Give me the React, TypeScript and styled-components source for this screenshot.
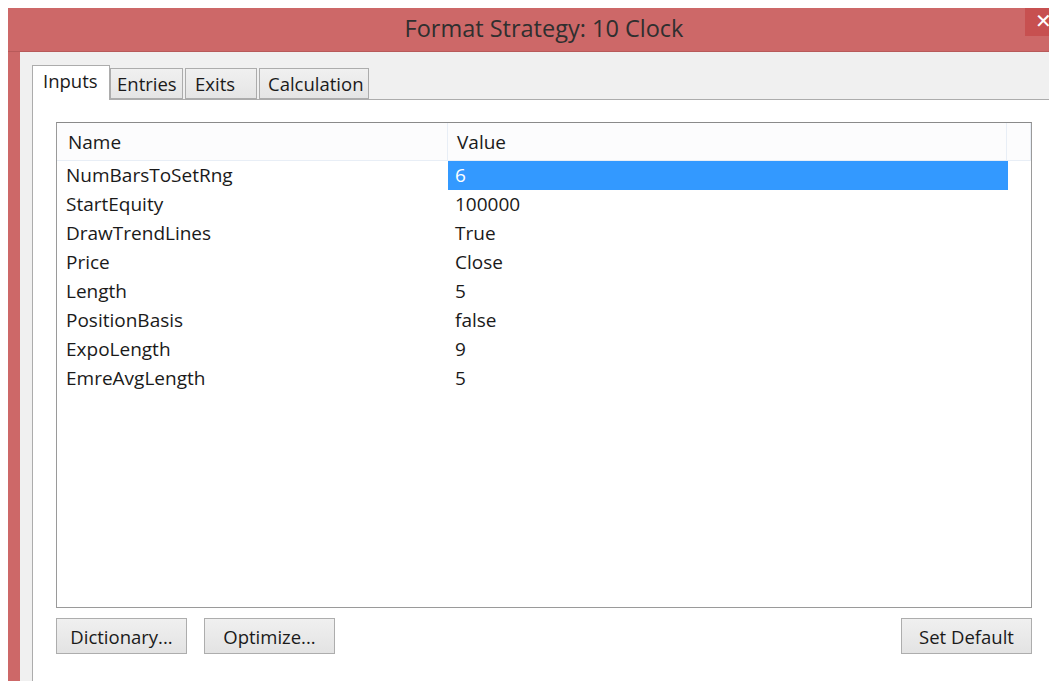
import styled, { createGlobalStyle } from 'styled-components';

const GlobalStyle = createGlobalStyle`
  html, body {
    margin: 0;
    padding: 0;
    background: #ffffff;
    overflow: hidden;
  }
  body {
    font-family: 'Open Sans', 'Noto Sans', 'DejaVu Sans', sans-serif;
    color: #1a1a1a;
  }
`;

const Screen = styled.div`
  width: 1049px;
  height: 681px;
  overflow: hidden;
  padding: 8px 0 0 8px;
  box-sizing: border-box;
`;

const Window = styled.div`
  width: 1080px;
  height: 720px;
  background: #cd6868;
  display: flex;
  flex-direction: column;
  padding-left: 12px;
  box-sizing: border-box;
`;

const TitleBar = styled.div`
  height: 43px;
  display: flex;
  align-items: center;
  justify-content: center;
  position: relative;
  margin-left: -12px;
  border-bottom: 1px solid #b85a5a;
`;

const Title = styled.div`
  font-size: 23.5px;
  color: #2f2f2f;
  padding-right: 8px;
  margin-top: -4px;
`;

const CloseButton = styled.div`
  position: absolute;
  top: 0;
  left: 1017px;
  width: 46px;
  height: 28px;
  background: #c75050;
  color: #ffffff;
  font-size: 20px;
  line-height: 26px;
  padding-left: 10px;
  box-sizing: border-box;
`;

const Client = styled.div`
  flex: 1;
  background: #f0f0f0;
  padding: 13px 0 0 12px;
  display: flex;
  flex-direction: column;
`;

const TabStrip = styled.div`
  display: flex;
  align-items: flex-end;
  height: 34px;
  position: relative;
  z-index: 1;
`;

const Tab = styled.div<{ $active?: boolean; $width: number; $indent: number }>`
  width: ${p => p.$width}px;
  height: ${p => (p.$active ? 35 : 31)}px;
  box-sizing: border-box;
  border: 1px solid #acacac;
  border-bottom: ${p => (p.$active ? 'none' : '1px solid #acacac')};
  background: ${p => (p.$active ? '#ffffff' : 'linear-gradient(#f0f0f0, #e5e5e5)')};
  font-size: 18.5px;
  display: flex;
  align-items: center;
  padding-left: ${p => p.$indent}px;
  margin-right: ${p => (p.$active ? 0 : 2)}px;
  padding-bottom: ${p => (p.$active ? 5 : 0)}px;
  margin-bottom: ${p => (p.$active ? -1 : 0)}px;
  white-space: nowrap;
  color: #1a1a1a;
`;

const Panel = styled.div`
  flex: 1;
  background: #ffffff;
  border-left: 1px solid #acacac;
  border-top: 1px solid #acacac;
  padding: 22px 0 0 23px;
  display: flex;
  flex-direction: column;
`;

const ListBox = styled.div`
  width: 976px;
  height: 486px;
  box-sizing: border-box;
  border: 1px solid #9a9a9a;
  border-top-color: #8a8a8a;
  background: #ffffff;
  display: flex;
  flex-direction: column;
`;

const HeaderRow = styled.div`
  display: grid;
  grid-template-columns: 391px 559px 1fr;
  height: 37px;
  background: #fcfcfd;
  border-bottom: 1px solid #e8eef6;
`;

const HeaderCell = styled.div<{ $pad: number }>`
  font-size: 19px;
  display: flex;
  align-items: center;
  padding-left: ${p => p.$pad}px;
  border-right: 1px solid #e8eef6;
  color: #1a1a1a;
`;

const Row = styled.div`
  display: grid;
  grid-template-columns: 391px 560px;
  height: 29px;
`;

const Cell = styled.div<{ $selected?: boolean; $pad: number }>`
  font-size: 19px;
  display: flex;
  align-items: center;
  padding-left: ${p => p.$pad}px;
  padding-bottom: 1px;
  background: ${p => (p.$selected ? '#3399ff' : 'transparent')};
  color: ${p => (p.$selected ? '#ffffff' : '#1a1a1a')};
`;

const ButtonRow = styled.div`
  display: flex;
  width: 976px;
  margin-top: 10px;
  gap: 17px;
`;

const Button = styled.div`
  width: 131px;
  height: 36px;
  box-sizing: border-box;
  border: 1px solid #adadad;
  background: linear-gradient(#f0f0f0, #e3e3e3);
  font-size: 18.5px;
  display: flex;
  align-items: center;
  justify-content: center;
  color: #1a1a1a;
`;

const Spacer = styled.div`
  flex: 1;
`;

const inputs = [
  ['NumBarsToSetRng', '6'],
  ['StartEquity', '100000'],
  ['DrawTrendLines', 'True'],
  ['Price', 'Close'],
  ['Length', '5'],
  ['PositionBasis', 'false'],
  ['ExpoLength', '9'],
  ['EmreAvgLength', '5'],
];

export default function App() {
  return (
    <>
      <GlobalStyle />
      <Screen>
        <Window>
          <TitleBar>
            <Title>Format Strategy: 10 Clock</Title>
            <CloseButton>✕</CloseButton>
          </TitleBar>
          <Client>
            <TabStrip>
              <Tab $active $width={78} $indent={10}>Inputs</Tab>
              <Tab $width={73} $indent={6}>Entries</Tab>
              <Tab $width={72} $indent={9}>Exits</Tab>
              <Tab $width={110} $indent={8}>Calculation</Tab>
            </TabStrip>
            <Panel>
              <ListBox>
                <HeaderRow>
                  <HeaderCell $pad={11}>Name</HeaderCell>
                  <HeaderCell $pad={9}>Value</HeaderCell>
                  <HeaderCell $pad={0} />
                </HeaderRow>
                {inputs.map(([name, value], i) => (
                  <Row key={name}>
                    <Cell $pad={9}>{name}</Cell>
                    <Cell $pad={7} $selected={i === 0}>{value}</Cell>
                  </Row>
                ))}
              </ListBox>
              <ButtonRow>
                <Button>Dictionary...</Button>
                <Button>Optimize...</Button>
                <Spacer />
                <Button>Set Default</Button>
              </ButtonRow>
            </Panel>
          </Client>
        </Window>
      </Screen>
    </>
  );
}
